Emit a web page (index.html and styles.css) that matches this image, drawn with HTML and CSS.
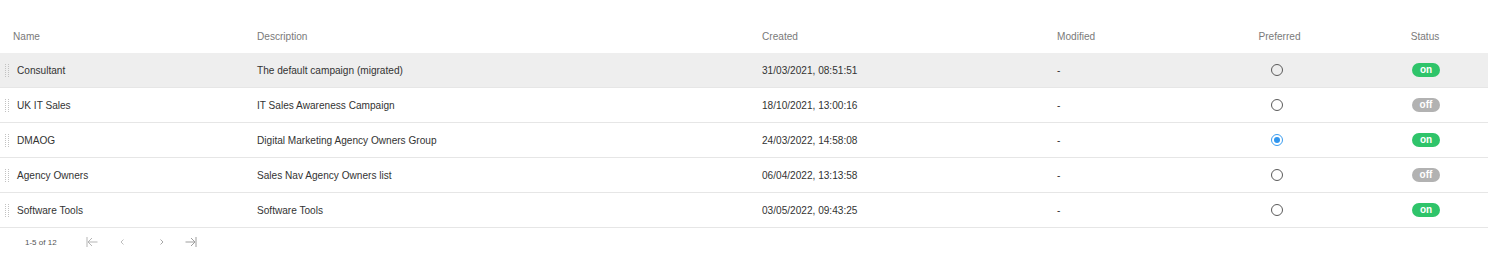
FILE: index.html
```html
<!DOCTYPE html>
<html>
<head>
<meta charset="utf-8">
<link rel="stylesheet" href="styles.css">
</head>
<body>
<div class="table">
  <div class="row head">
    <div class="cell">Name</div>
    <div class="cell">Description</div>
    <div class="cell">Created</div>
    <div class="cell">Modified</div>
    <div class="cell center">Preferred</div>
    <div class="cell center">Status</div>
  </div>
  <div class="row body hover">
    <div class="cell name"><span class="handle"></span>Consultant</div>
    <div class="cell">The default campaign (migrated)</div>
    <div class="cell">31/03/2021, 08:51:51</div>
    <div class="cell">-</div>
    <div class="cell center"><span class="radio"></span></div>
    <div class="cell center"><span class="badge on">on</span></div>
  </div>
  <div class="row body">
    <div class="cell name"><span class="handle"></span>UK IT Sales</div>
    <div class="cell">IT Sales Awareness Campaign</div>
    <div class="cell">18/10/2021, 13:00:16</div>
    <div class="cell">-</div>
    <div class="cell center"><span class="radio"></span></div>
    <div class="cell center"><span class="badge off">off</span></div>
  </div>
  <div class="row body">
    <div class="cell name"><span class="handle"></span>DMAOG</div>
    <div class="cell">Digital Marketing Agency Owners Group</div>
    <div class="cell">24/03/2022, 14:58:08</div>
    <div class="cell">-</div>
    <div class="cell center"><span class="radio checked"></span></div>
    <div class="cell center"><span class="badge on">on</span></div>
  </div>
  <div class="row body">
    <div class="cell name"><span class="handle"></span>Agency Owners</div>
    <div class="cell">Sales Nav Agency Owners list</div>
    <div class="cell">06/04/2022, 13:13:58</div>
    <div class="cell">-</div>
    <div class="cell center"><span class="radio"></span></div>
    <div class="cell center"><span class="badge off">off</span></div>
  </div>
  <div class="row body">
    <div class="cell name"><span class="handle"></span>Software Tools</div>
    <div class="cell">Software Tools</div>
    <div class="cell">03/05/2022, 09:43:25</div>
    <div class="cell">-</div>
    <div class="cell center"><span class="radio"></span></div>
    <div class="cell center"><span class="badge on">on</span></div>
  </div>
  <div class="pager">
    <span class="count">1-5 of 12</span>
    <span class="pbtn first"><svg width="12" height="12" viewBox="0 0 12 12"><path d="M1 1V11M2 6H11.5M2 6L6 2M2 6L6 10" fill="none" stroke="#b5b5b5" stroke-width="1"/></svg></span>
    <span class="pbtn prev"><svg width="12" height="12" viewBox="0 0 12 12"><path d="M7.5 3.5L5 6L7.5 8.5" fill="none" stroke="#bdbdbd" stroke-width="1"/></svg></span>
    <span class="pbtn next"><svg width="12" height="12" viewBox="0 0 12 12"><path d="M4.5 3.5L7 6L4.5 8.5" fill="none" stroke="#a8a8a8" stroke-width="1"/></svg></span>
    <span class="pbtn last"><svg width="12" height="12" viewBox="0 0 12 12"><path d="M11 1V11M0.5 6H10M10 6L6 2M10 6L6 10" fill="none" stroke="#9e9e9e" stroke-width="1"/></svg></span>
  </div>
</div>
</body>
</html>
```

FILE: styles.css
```css
html, body {
  margin: 0;
  padding: 0;
  background: #ffffff;
}
body {
  font-family: "Liberation Sans", Arial, Helvetica, sans-serif;
  font-size: 10.1px;
  color: #333333;
}
.table {
  width: 1488px;
  padding-top: 19px;
}
.row {
  display: grid;
  grid-template-columns: 244px 505px 295px 153px 165px 126px;
  align-items: center;
}
.row.head {
  height: 34px;
  color: #7a7a7a;
}
.row.body {
  height: 34px;
  border-bottom: 1px solid #e6e6e6;
}
.row.hover {
  background: #eeeeee;
}
.cell {
  padding-left: 13px;
  white-space: nowrap;
  display: flex;
  align-items: center;
}
.cell.center {
  justify-content: center;
  padding-left: 0;
}
.cell.name {
  padding-left: 5px;
}
.handle {
  width: 2px;
  height: 13px;
  margin-right: 8px;
  border-left: 1px dotted #c2c2c2;
  border-right: 1px dotted #c2c2c2;
}
.radio {
  width: 10px;
  height: 10px;
  border: 1px solid #5a5a5a;
  border-radius: 50%;
  box-sizing: content-box;
  margin-right: 6px;
  display: inline-block;
  position: relative;
}
.radio.checked {
  border-color: #3a9df0;
}
.radio.checked::after {
  content: "";
  position: absolute;
  left: 2px;
  top: 2px;
  width: 6px;
  height: 6px;
  border-radius: 50%;
  background: #2f95ee;
}
.badge {
  display: inline-block;
  width: 28px;
  height: 14px;
  line-height: 14px;
  border-radius: 7px;
  text-align: center;
  color: #ffffff;
  font-size: 10px;
  font-weight: bold;
  margin-left: 2px;
}
.badge.on {
  background: #2fc46a;
}
.badge.off {
  background: #b2b2b2;
}
.pager {
  display: flex;
  align-items: center;
  height: 28px;
}
.count {
  font-size: 8px;
  color: #555555;
  margin-left: 25px;
  width: 61px;
}
.pbtn {
  display: inline-flex;
  align-items: center;
}
.pbtn.prev { margin-left: 18px; }
.pbtn.next { margin-left: 28px; }
.pbtn.last { margin-left: 17px; }
```
